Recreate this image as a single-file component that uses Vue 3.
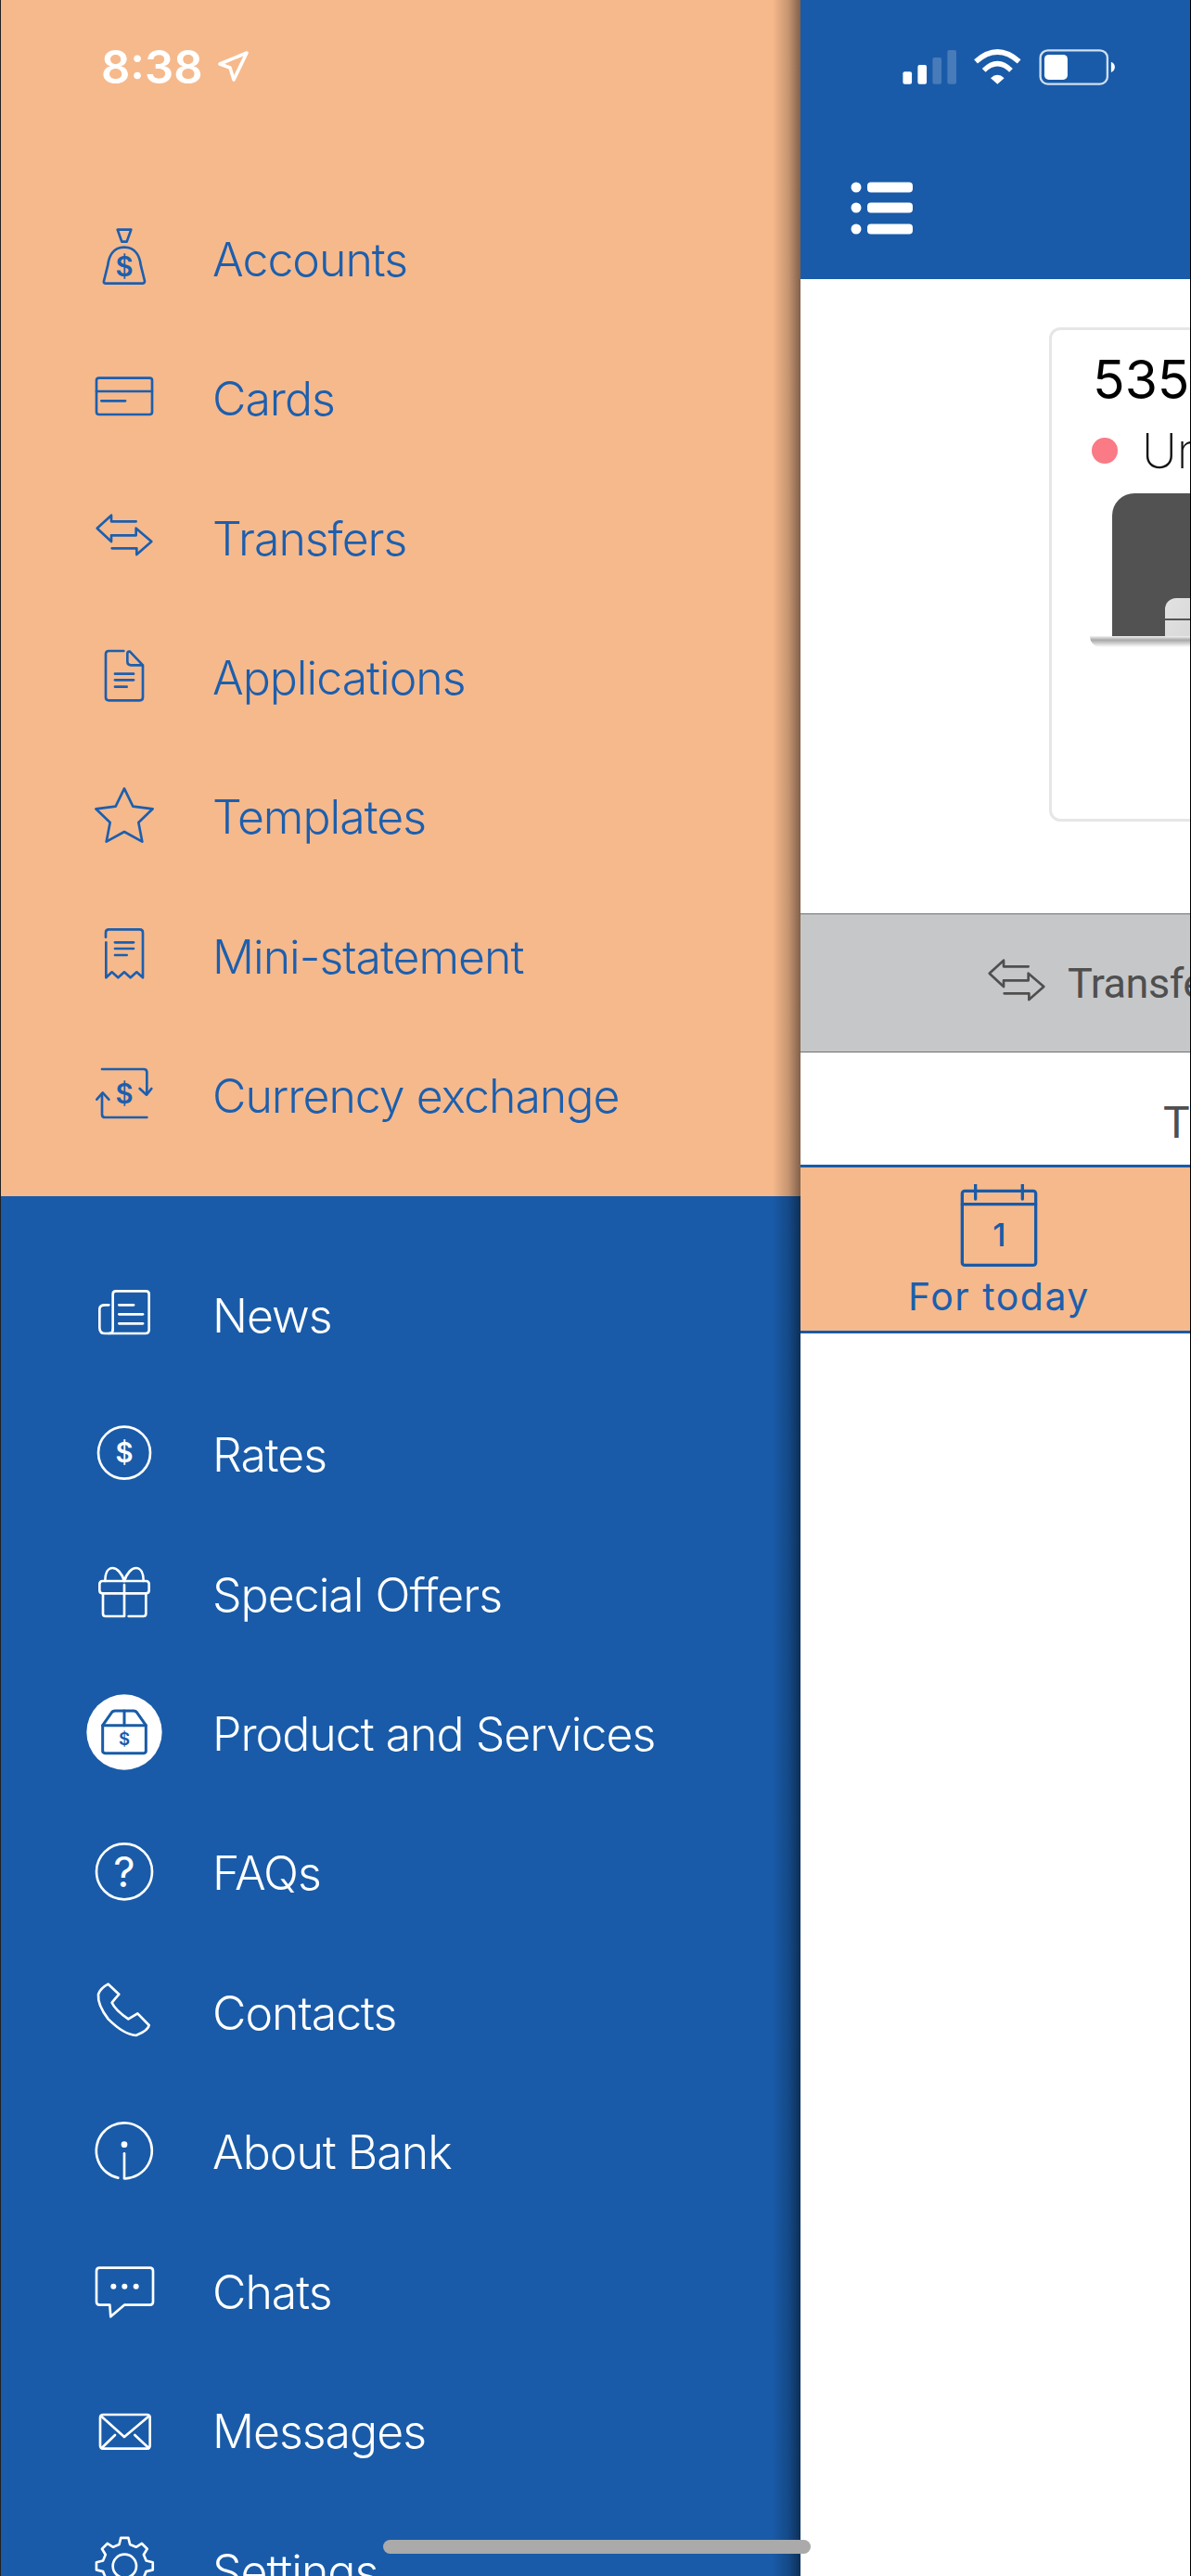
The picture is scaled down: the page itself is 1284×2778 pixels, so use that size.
<script setup>
const gear = (() => {
  const cx = 97, cy = 82, out = 92, root = 72, n = 8
  let d = ''
  for (let i = 0; i < n; i++) {
    const a = (i / n) * Math.PI * 2 - Math.PI / 2
    const w = Math.PI / n
    const pts = [
      [root, a - w * 0.62],
      [out, a - w * 0.34],
      [out, a + w * 0.34],
      [root, a + w * 0.62]
    ]
    pts.forEach(([r, t], j) => {
      const x = (cx + r * Math.cos(t)).toFixed(1)
      const y = (cy + r * Math.sin(t)).toFixed(1)
      d += (i === 0 && j === 0 ? 'M' : 'L') + x + ' ' + y + ' '
    })
  }
  return d + 'Z'
})()

const transfer = 'M134 43H54V23L8 65L54 108V88H134V65L184 108L136 150V130H56'

const topItems = [
  { label: 'Accounts', d: ['M74 2H118L104 41H88Z', 'M96 59C134 59 146 91 149 116L162 168Q162 176 154 176H36Q28 176 30 168L43 116C46 91 58 59 96 59Z'], t: [{ x: 96, y: 153, s: 88, v: '$' }] },
  { label: 'Cards', d: ['M14 29H178Q186 29 186 37V139Q186 147 178 147H14Q6 147 6 139V37Q6 29 14 29Z', 'M6 72H186', 'M22 103H99'] },
  { label: 'Transfers', d: [transfer] },
  { label: 'Applications', d: ['M94 9H46Q36 9 36 19V159Q36 169 46 169H146Q156 169 156 159V55L114 11Q106 9 106 19V43Q106 55 118 55H156', 'M66 83H126', 'M66 103H126', 'M66 125H104'] },
  { label: 'Templates', d: ['M96 4L124 62L188 70L142 114L154 176L96 144L38 176L50 114L4 70L68 62Z'] },
  { label: 'Mini-statement', d: ['M36 35V20Q36 10 46 10H146Q156 10 156 20V166L136 148L116 166L96 148L76 166L56 148L37 166V52', 'M66 52H126', 'M66 72H126', 'M66 93H104'] },
  { label: 'Currency exchange', d: ['M24 9H159Q169 9 169 19V86', 'M146 72L168 92L184 72', 'M169 165H34Q24 165 24 155V92', 'M7 107L26 85L46 107'], t: [{ x: 96, y: 119, s: 88, v: '$' }] }
]

const bottomItems = [
  { label: 'News', d: ['M59 144V29Q59 19 69 19H166Q176 19 176 29V144Q176 156 164 156H34Q16 156 16 137V77Q16 64 34 64H46', 'M59 144Q59 156 46 156', 'M79 64H126', 'M79 94H156', 'M79 124H156'] },
  { label: 'Rates', d: [], c: [{ x: 96, y: 89, r: 84 }], t: [{ x: 96, y: 121, s: 88, v: '$' }] },
  { label: 'Special Offers', d: ['M26 54H166Q176 54 176 64V84Q176 94 166 94H26Q16 94 16 84V64Q16 54 26 54Z', 'M27 94V160Q27 168 35 168H96V66', 'M110 168H158Q166 168 166 160V94', 'M96 54C88 28 72 12 58 12C42 12 34 30 34 54', 'M96 54C104 28 120 12 134 12C150 12 158 30 158 54'] },
  { label: 'Product and Services', active: true, d: ['M66 21H126Q134 21 138 28L166 68V151Q166 158 159 158H34Q26 158 26 151V68L54 28Q58 21 66 21Z', 'M26 68H166', 'M96 21V68'], t: [{ x: 96, y: 131, s: 56, v: '$' }] },
  { label: 'FAQs', d: [], c: [{ x: 96, y: 91, r: 90 }], t: [{ x: 96, y: 142, s: 137, v: '?', w: 400 }] },
  { label: 'Contacts', d: ['M44 5L79 38Q68 50 56 65Q66 88 109 118L139 100L176 138Q174 155 134 171Q94 168 44 118Q9 73 12 38Q19 18 44 5Z'] },
  { label: 'About Bank', d: ['M76 179A90 90 0 1 1 100 181', 'M96 100V181'], dots: [{ x: 96, y: 71, r: 10 }] },
  { label: 'Chats', d: ['M49 140H16Q6 140 6 130V30Q6 20 16 20H179Q189 20 189 30V130Q189 140 179 140H96L52 178Z'], dots: [{ x: 61, y: 80, r: 9 }, { x: 97, y: 80, r: 9 }, { x: 134, y: 80, r: 9 }] },
  { label: 'Messages', d: ['M28 42H169Q179 42 179 52V142Q179 152 169 152H28Q18 152 18 142V52Q18 42 28 42Z', 'M20 46L96 114L177 46', 'M23 150L66 108', 'M175 150L130 108'] },
  { label: 'Settings', d: [gear], c: [{ x: 97, y: 82, r: 38 }] }
]

const sections = [
  { key: 'top', items: topItems },
  { key: 'bottom', items: bottomItems }
]
</script>

<template>
  <div class="phone">
    <aside class="drawer">
      <section v-for="sec in sections" :key="sec.key" :class="['sec', sec.key]">
        <div v-if="sec.key === 'top'" class="clock">
          <span class="time">8:38</span>
          <svg class="loc" width="36" height="36" viewBox="0 0 36 36">
            <path d="M3 15L32 3L18 32L14 19Z" fill="none" stroke="#fff" stroke-width="3.6" stroke-linejoin="round" />
          </svg>
        </div>
        <div v-for="it in sec.items" :key="it.label" class="row">
          <span class="ico">
            <svg class="glyph" viewBox="0 0 192 192" width="64" height="64">
              <circle v-if="it.active" class="disc" cx="96" cy="90" r="122" />
              <g :class="['shape', { dark: it.active }]">
                <path v-for="p in it.d" :key="p" :d="p" />
                <circle v-for="c in it.c || []" :key="c.r" :cx="c.x" :cy="c.y" :r="c.r" />
              </g>
              <g :class="['fillset', { dark: it.active }]">
                <circle v-for="o in it.dots || []" :key="o.x" :cx="o.x" :cy="o.y" :r="o.r" />
                <text v-for="s in it.t || []" :key="s.v" :x="s.x" :y="s.y" :font-size="s.s" :font-weight="s.w || 600" text-anchor="middle">{{ s.v }}</text>
              </g>
            </svg>
          </span>
          <span class="lbl">{{ it.label }}</span>
        </div>
      </section>
    </aside>

    <main class="main">
      <header class="head">
        <svg class="sys" viewBox="360 150 700 130" width="233.3" height="43.3">
          <rect x="370" y="232" width="29" height="40" rx="6" fill="#fff" />
          <rect x="418" y="210" width="29" height="62" rx="6" fill="#fff" />
          <rect x="466" y="186" width="29" height="86" rx="6" fill="#fff" opacity=".2" />
          <rect x="514" y="162" width="29" height="110" rx="6" fill="#fff" opacity=".2" />
          <path d="M606 199Q676 137 746 199" fill="none" stroke="#fff" stroke-width="17" />
          <path d="M632 228Q676 184 720 228" fill="none" stroke="#fff" stroke-width="16" />
          <path d="M654 253Q676 232 698 253L676 272Z" fill="#fff" />
          <rect x="815" y="163" width="217" height="109" rx="24" fill="none" stroke="#fff" stroke-opacity=".8" stroke-width="7" />
          <rect x="828" y="177" width="75" height="81" rx="14" fill="#fff" />
          <path d="M1044 200Q1056 205 1056 217Q1056 229 1044 234Z" fill="#fff" />
        </svg>
        <svg class="burger" viewBox="0 0 67 57" width="67" height="57">
          <g fill="#fff">
            <circle cx="6" cy="6" r="5.5" /><rect x="18" y="0.5" width="49" height="11" rx="4" />
            <circle cx="6" cy="28" r="5.5" /><rect x="18" y="22.5" width="49" height="11" rx="4" />
            <circle cx="6" cy="51" r="5.5" /><rect x="18" y="45.5" width="49" height="11" rx="4" />
          </g>
        </svg>
      </header>

      <div class="hero">
        <div class="card">
          <div class="num">535</div>
          <div class="state"><i class="dot"></i><span class="st">Un</span></div>
          <div class="device">
            <div class="screen"><div class="key"></div></div>
            <div class="base"></div>
          </div>
        </div>
      </div>

      <div class="band">
        <svg viewBox="0 0 192 192" width="64" height="64" class="band-ico">
          <path :d="transfer" />
        </svg>
        <span class="band-txt">Transfers</span>
      </div>

      <div class="title">T</div>

      <div class="tabs">
        <div class="tab">
          <svg viewBox="555 950 253 268" width="84.3" height="89.3" class="cal">
            <rect x="562" y="972" width="238" height="240" rx="8" />
            <path d="M562 1015H800M605 952V998M757 952V998" />
            <text x="682" y="1150" font-size="103" font-weight="500" text-anchor="middle">1</text>
          </svg>
          <span class="tab-txt">For today</span>
        </div>
      </div>
    </main>

    <div class="home"></div>
  </div>
</template>

<style>
html, body { margin: 0; background: #fff; }
</style>

<style scoped>
.phone {
  position: relative;
  display: flex;
  width: 1284px;
  height: 2778px;
  overflow: hidden;
  box-sizing: border-box;
  border-left: 1px solid #222;
  border-right: 1px solid #000;
  background: #fff;
  font-family: Inter, "Liberation Sans", sans-serif;
}
.drawer {
  position: relative;
  z-index: 1;
  flex: 0 0 862px;
  display: flex;
  flex-direction: column;
  height: 2778px;
}
.drawer::after {
  content: "";
  position: absolute;
  top: 0;
  right: 0;
  bottom: 0;
  width: 30px;
  background: linear-gradient(to right, rgba(0,0,0,0), rgba(0,0,0,.2) 57%, rgba(0,0,0,.48));
}
.sec { box-sizing: border-box; }
.top {
  flex: 0 0 1290px;
  background: #f6b98c;
  color: #1c5fae;
  --ink: #1c5fae;
}
.bottom {
  flex: 1;
  background: #195ba8;
  color: #fff;
  --ink: #fff;
  padding-top: 53px;
  overflow: hidden;
}
.clock {
  height: 204px;
  box-sizing: border-box;
  padding: 48px 0 0 108px;
  display: flex;
  align-items: flex-start;
  gap: 15px;
}
.time {
  color: #fff;
  font-size: 49px;
  line-height: 50px;
  font-weight: 600;
}
.loc { margin-top: 6px; }
.row {
  height: 150.45px;
  display: flex;
  align-items: center;
  padding-left: 101px;
}
.ico { flex: 0 0 64px; height: 64px; display: block; }
.glyph { display: block; overflow: visible; }
.disc { fill: #fff; }
.shape { fill: none; stroke: var(--ink); stroke-width: 8; stroke-linecap: round; stroke-linejoin: round; }
.fillset { fill: var(--ink); font-family: Inter, "Liberation Sans", sans-serif; }
.shape.dark { stroke: #195ba8; stroke-width: 9; }
.fillset.dark { fill: #195ba8; }
.lbl {
  margin: 1px 0 0 63px;
  font-size: 50px;
  font-weight: 300;
  line-height: 60px;
  letter-spacing: -1px;
  white-space: nowrap;
}
.main {
  flex: 1;
  min-width: 0;
  display: flex;
  flex-direction: column;
  overflow: hidden;
}
.head {
  height: 301px;
  flex: none;
  box-sizing: border-box;
  background: #195ba8;
  padding: 50px 0 0 54px;
}
.sys { display: block; margin-left: 53px; }
.burger { display: block; margin-top: 103px; filter: blur(.5px); }
.hero {
  height: 684px;
  flex: none;
  box-sizing: border-box;
  padding: 52px 0 0 268px;
}
.card {
  width: 400px;
  height: 533px;
  box-sizing: border-box;
  border: 3px solid #e6e6e6;
  border-radius: 12px;
  padding: 19px 0 0 44px;
}
.num {
  font-size: 57px;
  line-height: 70px;
  font-weight: 400;
  color: #000;
}
.state {
  display: flex;
  align-items: center;
  margin: 8px 0 0 -1px;
  height: 66px;
}
.dot {
  flex: none;
  width: 28px;
  height: 28px;
  border-radius: 50%;
  background: #fa7a85;
}
.st {
  margin-left: 26px;
  font-size: 52px;
  font-weight: 200;
  color: #111;
}
.device { margin: 13px 0 0 -3px; position: relative; }
.screen {
  margin-left: 24px;
  height: 154px;
  width: 340px;
  box-sizing: border-box;
  padding: 113px 0 0 57px;
  background: #525252;
  border-top-left-radius: 24px;
  border-top-right-radius: 24px;
}
.key {
  height: 41px;
  border-top-left-radius: 12px;
  background:
    linear-gradient(#555, #555) 0 22px / 100% 2px no-repeat,
    linear-gradient(120deg, #e2e2e2, #a9a9a9);
}
.base {
  height: 12px;
  background: linear-gradient(#f2f2f2, #a8a8a8 35%, rgba(255,255,255,0));
  border-radius: 0 0 0 12px;
}
.band {
  flex: none;
  height: 150px;
  box-sizing: border-box;
  border-top: 1px solid #6f7071;
  border-bottom: 1px solid #6f7071;
  background: #c6c7c9;
  display: flex;
  align-items: center;
  padding-left: 201px;
  color: #4f4f4f;
  white-space: nowrap;
}
.band-ico { flex: none; fill: none; stroke: #4f4f4f; stroke-width: 8; stroke-linecap: round; stroke-linejoin: round; }
.band-txt {
  margin-left: 23px;
  font-family: Roboto, sans-serif;
  font-size: 45px;
  letter-spacing: -.5px;
}
.title {
  flex: none;
  height: 121px;
  box-sizing: border-box;
  padding: 46px 0 0 391px;
  font-size: 48px;
  line-height: 60px;
  color: #4f4f4f;
  font-family: Roboto, sans-serif;
}
.tabs {
  flex: none;
  height: 182px;
  box-sizing: border-box;
  border-top: 3px solid #195ba8;
  border-bottom: 3px solid #195ba8;
  background: #f6b98c;
  display: flex;
}
.tab {
  flex: 0 0 428px;
  display: flex;
  flex-direction: column;
  align-items: center;
  padding-top: 18px;
  color: #1c5fae;
}
.cal { display: block; fill: none; stroke: #195ba8; stroke-width: 10; stroke-linecap: round; stroke-linejoin: round; }
.cal text { fill: #195ba8; stroke: none; font-family: Inter, sans-serif; }
.tab-txt {
  margin-top: 7px;
  font-size: 41px;
  line-height: 50px;
  letter-spacing: 1.5px;
  white-space: nowrap;
}
.home {
  position: absolute;
  z-index: 2;
  left: 412px;
  top: 2739px;
  width: 461px;
  height: 15px;
  border-radius: 8px;
  background: #aaa;
}
</style>
